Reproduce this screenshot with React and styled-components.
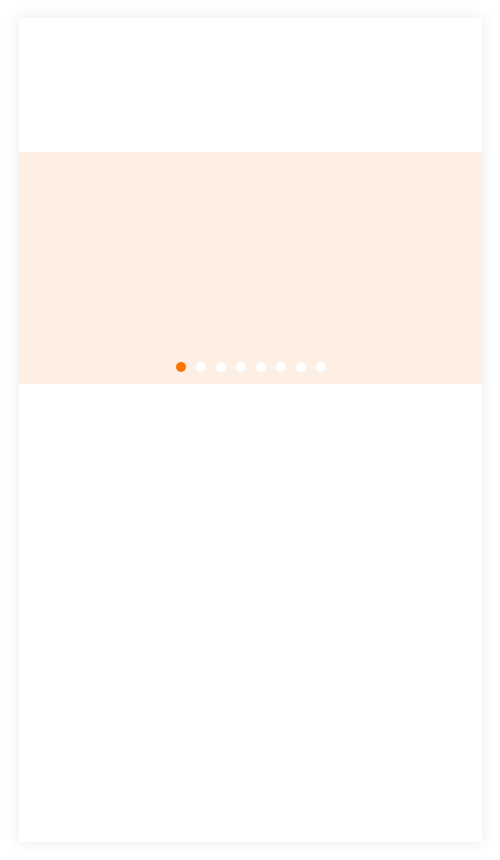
import React from "react";
import styled, { createGlobalStyle } from "styled-components";

const Global = createGlobalStyle`
  html, body { margin: 0; padding: 0; background: #ffffff; font-family: "Liberation Sans", Arial, sans-serif; }
`;

const Page = styled.div`
  padding: 18px;
  display: flex;
  justify-content: center;
`;

const Card = styled.div`
  width: 463px;
  height: 824px;
  background: #ffffff;
  box-shadow: 0 0 14px rgba(0, 0, 0, 0.09);
  display: flex;
  flex-direction: column;
`;

const Header = styled.div`
  height: 134px;
`;

const Banner = styled.div`
  height: 232px;
  background: #fdefe3;
  display: flex;
  flex-direction: column;
  justify-content: flex-end;
  align-items: center;
  padding: 0 0 12px 2px;
  box-sizing: border-box;
`;

const Dots = styled.div`
  display: flex;
  gap: 10px;
`;

const Dot = styled.span`
  width: 10px;
  height: 10px;
  border-radius: 50%;
  background: ${(p) => (p.$active ? "#ff7300" : "#ffffff")};
`;

export default function App() {
  return (
    <>
      <Global />
      <Page>
        <Card>
          <Header />
          <Banner>
            <Dots>
              {Array.from({ length: 8 }).map((_, i) => (
                <Dot key={i} $active={i === 0} />
              ))}
            </Dots>
          </Banner>
        </Card>
      </Page>
    </>
  );
}
